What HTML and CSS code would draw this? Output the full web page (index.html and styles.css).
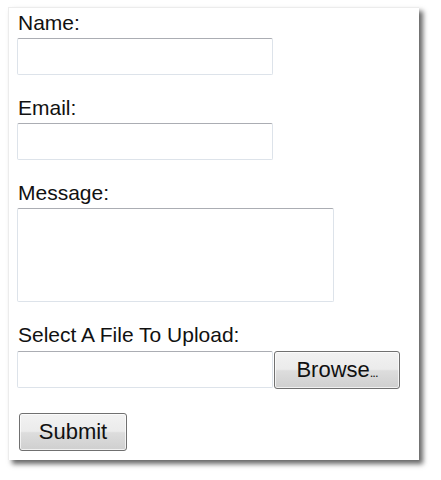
FILE: index.html
```html
<!DOCTYPE html>
<html>
<head>
<meta charset="utf-8">
<link rel="stylesheet" href="styles.css">
</head>
<body>
<form class="panel">
  <div class="field">
    <label class="label">Name:</label>
    <div class="input short"></div>
  </div>
  <div class="field">
    <label class="label">Email:</label>
    <div class="input short"></div>
  </div>
  <div class="field">
    <label class="label">Message:</label>
    <div class="input area"></div>
  </div>
  <div class="field file-field">
    <label class="label">Select A File To Upload:</label>
    <div class="file-row">
      <div class="input short"></div>
      <div class="btn browse">Browse<span class="dots">...</span></div>
    </div>
  </div>
  <div class="field submit-row">
    <div class="btn submit">Submit</div>
  </div>
</form>
</body>
</html>
```
FILE: styles.css
```css
html, body {
  margin: 0;
  padding: 0;
  background: #ffffff;
}
body {
  font-family: "Liberation Sans", Arial, sans-serif;
  font-size: 21px;
  color: #111111;
  min-height: 480px;
  padding-top: 7px;
  box-sizing: border-box;
}
.panel {
  margin: 0 0 0 8px;
  width: 411px;
  height: 453px;
  box-sizing: border-box;
  padding: 3px 8px 0 8px;
  background: #ffffff;
  border-left: 1px solid #ececec;
  border-top: 1px solid #ececec;
  box-shadow: 4px 4px 5px rgba(0, 0, 0, 0.6);
  display: flex;
  flex-direction: column;
  gap: 21px;
}
.field {
  display: flex;
  flex-direction: column;
  gap: 3px;
}
.file-field {
  gap: 4px;
}
.label {
  display: block;
  line-height: 24px;
  height: 24px;
  padding-left: 1px;
}
.input {
  box-sizing: border-box;
  height: 37px;
  border: 1px solid #dde3ea;
  border-top-color: #abadb3;
  border-radius: 2px;
  background: #fff;
}
.short {
  width: 256px;
}
.area {
  width: 317px;
  height: 94px;
}
.file-row {
  display: flex;
  gap: 1px;
  align-items: flex-start;
}
.btn {
  box-sizing: border-box;
  height: 38px;
  border: 1px solid #707070;
  border-radius: 3px;
  background: linear-gradient(#f2f2f2 0%, #ebebeb 48%, #dddddd 52%, #cfcfcf 100%);
  display: flex;
  align-items: center;
  justify-content: center;
  line-height: 1;
  font-size: 22px;
  box-shadow: inset 0 0 0 1px rgba(255, 255, 255, 0.7);
  color: #111111;
}
.browse {
  width: 126px;
}
.dots {
  font-size: 13px;
  align-self: flex-end;
  margin-bottom: 9px;
  letter-spacing: -1px;
}
.submit-row {
  margin-top: 3px;
  padding-left: 2px;
}
.submit {
  width: 108px;
}
```
